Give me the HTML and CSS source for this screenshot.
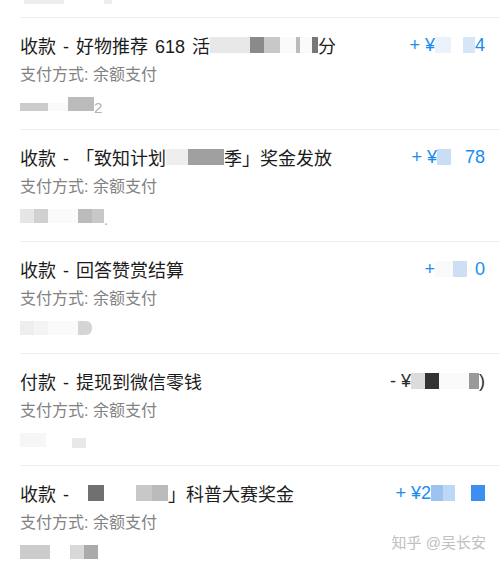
FILE: index.html
```html
<!DOCTYPE html>
<html lang="zh-CN">
<head>
    <meta charset="UTF-8">
    <meta name="viewport" content="width=device-width, initial-scale=1.0">
    <title>钱包明细</title>
    <link rel="stylesheet" href="styles.css">
</head>
<body>
    <div class="page">
        <div class="top-cut">
            <span class="m w40 faint"></span><span class="m w8 faint gap30"></span>
        </div>

        <div class="list">
            <div class="item">
                <div class="head">
                    <div class="title">收款 - 好物推荐 618 活<span class="m w40 c-e8"></span><span class="m w14 c-8a"></span><span class="m w16 c-c8"></span><span class="m w16 c-fa"></span><span class="m w4 c-bbb"></span><span class="m w12 c-fa"></span><span class="m w6 c-77"></span>分</div>
                    <div class="amount">+ ¥<span class="m w16 c-eaf2fb"></span><span class="m w12 c-fff"></span><span class="m w12 c-d6e6f8"></span>4</div>
                </div>
                <div class="pay">支付方式: 余额支付</div>
                <div class="date"><span class="m w28 c-ccc short"></span><span class="m w20 c-fafafa short"></span><span class="m w26 c-bbb"></span><span class="digit">2</span></div>
            </div>

            <div class="item">
                <div class="head">
                    <div class="title">收款 - 「致知计划<span class="m w22 c-eee"></span><span class="m w36 c-a0"></span>季」奖金发放</div>
                    <div class="amount">+ ¥<span class="m w14 c-d2e4f8"></span><span class="m w14 c-fff"></span>78</div>
                </div>
                <div class="pay">支付方式: 余额支付</div>
                <div class="date"><span class="m w14 c-e6"></span><span class="m w14 c-d0"></span><span class="m w30 c-fafafa"></span><span class="m w14 c-bbb"></span><span class="m w12 c-c8"></span><span class="digit">.</span></div>
            </div>

            <div class="item">
                <div class="head">
                    <div class="title">收款 - 回答赞赏结算</div>
                    <div class="amount">+<span class="m w18 c-fafafa"></span><span class="m w14 c-cddff3"></span><span class="m w8 c-fff"></span>0</div>
                </div>
                <div class="pay">支付方式: 余额支付</div>
                <div class="date"><span class="m w14 c-eee"></span><span class="m w14 c-f4"></span><span class="m w30 c-fafafa"></span><span class="m w14 c-d4 round"></span></div>
            </div>

            <div class="item">
                <div class="head">
                    <div class="title">付款 - 提现到微信零钱</div>
                    <div class="amount minus">- ¥<span class="m w14 c-dcdcdc"></span><span class="m w14 c-33"></span><span class="m w30 c-fafafa"></span><span class="m w10 c-9a"></span>)</div>
                </div>
                <div class="pay">支付方式: 余额支付</div>
                <div class="date"><span class="m w26 c-f6"></span><span class="m w26 c-fff"></span><span class="m w14 c-e8 low"></span></div>
            </div>

            <div class="item">
                <div class="head">
                    <div class="title">收款 - <span class="m w12 c-fff"></span><span class="m w16 c-70"></span><span class="m w32 c-fff"></span><span class="m w16 c-c8"></span><span class="m w16 c-bbb"></span>」科普大赛奖金</div>
                    <div class="amount">+ ¥2<span class="m w12 c-9cc4ee"></span><span class="m w12 c-bcd8f6"></span><span class="m w16 c-fff"></span><span class="m w14 c-3b8ff0"></span></div>
                </div>
                <div class="pay">支付方式: 余额支付</div>
                <div class="date"><span class="m w30 c-ccc"></span><span class="m w20 c-fff"></span><span class="m w14 c-d8"></span><span class="m w14 c-aaa"></span></div>
            </div>
        </div>

        <div class="watermark">知乎 @吴长安</div>
    </div>
</body>
</html>
```

FILE: styles.css
```css
* {
    box-sizing: border-box;
}
body {
    margin: 0;
    background-color: #ffffff;
    font-family: "Liberation Sans", "Noto Sans CJK SC", sans-serif;
    overflow: hidden;
}
.page {
    position: relative;
    width: 500px;
    height: 562px;
    overflow: hidden;
}
.top-cut {
    height: 17px;
    padding: 0 0 0 24px;
    display: flex;
    align-items: flex-start;
}
.top-cut .m {
    height: 4px;
}
.faint {
    background-color: #ededed;
}
.gap30 {
    margin-left: 40px;
}
.item {
    margin-left: 20px;
    padding: 14px 15px 14px 0;
    border-top: 1px solid #eeeeee;
    height: 112px;
}
.head {
    display: flex;
    justify-content: space-between;
    align-items: center;
    height: 26px;
}
.title {
    font-size: 18px;
    color: #1c1c1c;
    word-spacing: 2px;
    display: flex;
    align-items: center;
    white-space: pre;
}
.amount {
    font-size: 18px;
    color: #1a8cee;
    display: flex;
    align-items: center;
    white-space: pre;
}
.amount.minus {
    color: #2a2a2a;
}
.pay {
    margin-top: 6px;
    font-size: 16px;
    line-height: 22px;
    color: #828282;
}
.date {
    margin-top: 8px;
    height: 20px;
    display: flex;
    align-items: center;
}
.digit {
    font-size: 15px;
    color: #b0b0b0;
    margin-top: 6px;
}
.m {
    display: inline-block;
    height: 16px;
}
.date .m {
    height: 14px;
}
.date .short {
    height: 8px;
    margin-top: 6px;
}
.date .round {
    border-radius: 0 6px 6px 0;
}
.date .low {
    margin-top: 6px;
    height: 10px;
}
.w4 { width: 4px; }
.w6 { width: 6px; }
.w8 { width: 8px; }
.w10 { width: 10px; }
.w12 { width: 12px; }
.w14 { width: 14px; }
.w16 { width: 16px; }
.w18 { width: 18px; }
.w20 { width: 20px; }
.w22 { width: 22px; }
.w26 { width: 26px; }
.w28 { width: 28px; }
.w30 { width: 30px; }
.w32 { width: 32px; }
.w36 { width: 36px; }
.w40 { width: 40px; }
.c-fff { background-color: #ffffff; }
.c-fa { background-color: #fafafa; }
.c-fafafa { background-color: #fafafa; }
.c-f4 { background-color: #f4f4f4; }
.c-f6 { background-color: #f6f6f6; }
.c-eee { background-color: #eeeeee; }
.c-e8 { background-color: #e8e8e8; }
.c-e6 { background-color: #e6e6e6; }
.c-dcdcdc { background-color: #dcdcdc; }
.c-d8 { background-color: #d8d8d8; }
.c-d4 { background-color: #d4d4d4; }
.c-d0 { background-color: #d0d0d0; }
.c-ccc { background-color: #cccccc; }
.c-c8 { background-color: #c8c8c8; }
.c-bbb { background-color: #bbbbbb; }
.c-aaa { background-color: #aaaaaa; }
.c-a0 { background-color: #a0a0a0; }
.c-9a { background-color: #9a9a9a; }
.c-8a { background-color: #8a8a8a; }
.c-77 { background-color: #777777; }
.c-70 { background-color: #707070; }
.c-33 { background-color: #333333; }
.c-eaf2fb { background-color: #eaf2fb; }
.c-d6e6f8 { background-color: #d6e6f8; }
.c-d2e4f8 { background-color: #c9def6; }
.c-cddff3 { background-color: #cddff3; }
.c-9cc4ee { background-color: #9cc4ee; }
.c-bcd8f6 { background-color: #bcd8f6; }
.c-3b8ff0 { background-color: #3b8ff0; }
.watermark {
    position: absolute;
    right: 14px;
    bottom: 10px;
    font-size: 15px;
    color: #c0c0c0;
}
```
